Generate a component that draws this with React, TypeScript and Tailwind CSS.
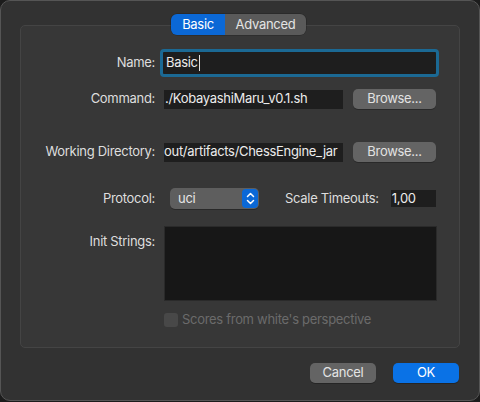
import React from "react";

const font = { fontFamily: "Inter, 'Noto Sans', sans-serif" };

function Label({ children, className = "" }: { children: React.ReactNode; className?: string }) {
  return (
    <div className={"w-[134px] shrink-0 text-right text-[13px] text-[#dedede] " + className}>{children}</div>
  );
}

function BrowseButton() {
  return (
    <div className="ml-[10px] flex h-[20px] w-[83px] items-center justify-center rounded-[5px] bg-[#646464] text-[13px] text-[#e2e2e2] shadow-[0_1px_0_rgba(0,0,0,0.25)]">
      Browse...
    </div>
  );
}

export default function App() {
  return (
    <div className="h-[402px] w-[480px] bg-[#1c1c1c] tracking-[-0.3px]" style={font}>
      <div className="flex h-[401px] w-[480px] flex-col rounded-[10px] border border-[#555555] bg-[#323232] px-[19px]">
        {/* tabs */}
        <div className="relative z-10 mt-[13px] -mb-[10px] flex justify-center pr-[3px]">
          <div className="flex h-[21px] overflow-hidden rounded-[6px] text-[13px] shadow-[0_0_0_0.5px_rgba(0,0,0,0.3)]">
            <div className="flex w-[54px] items-center justify-center bg-[#0b68d6] text-white">Basic</div>
            <div className="flex w-[81px] items-center justify-center bg-[#5a5a5a] text-[#e4e4e4]">Advanced</div>
          </div>
        </div>
        {/* group box */}
        <div className="flex h-[323px] flex-col rounded-[5px] border border-[#444444] bg-[#373737] pt-[23px]">
          {/* Name */}
          <div className="flex items-center">
            <Label>Name:</Label>
            <div className="ml-[5px] flex h-[28px] w-[279px] items-center rounded-[4px] border-[3px] border-[#1b6994] bg-[#1e1e1e] pl-[3px] text-[13px] text-[#ececec]">
              Basic<span className="ml-px inline-block h-[16px] w-px bg-[#e0e0e0]" />
            </div>
          </div>
          {/* Command */}
          <div className="mt-[12px] flex items-center">
            <Label>Command:</Label>
            <div className="ml-[9px] flex h-[19px] w-[179px] items-center bg-[#1e1e1e] pl-[1px] text-[13px] text-[#ececec]">
              ./KobayashiMaru_v0.1.sh
            </div>
            <BrowseButton />
          </div>
          {/* Working directory */}
          <div className="mt-[33px] flex items-center">
            <Label>Working Directory:</Label>
            <div className="ml-[9px] flex h-[19px] w-[179px] items-center overflow-hidden whitespace-nowrap bg-[#1e1e1e] text-[13px] text-[#ececec]">
              out/artifacts/ChessEngine_jar
            </div>
            <BrowseButton />
          </div>
          {/* Protocol */}
          <div className="mt-[26px] flex items-center">
            <Label>Protocol:</Label>
            <div className="ml-[15px] flex h-[21px] w-[89px] items-center justify-between rounded-[5px] bg-[#5e5e5e] pl-[8px] pr-[1px] text-[13px] text-[#e6e6e6] shadow-[0_1px_0_rgba(0,0,0,0.25)]">
              <span>uci</span>
              <div className="flex h-[19px] w-[16px] items-center justify-center rounded-[4px] bg-[#0b68d6]">
                <svg width="9" height="13" viewBox="0 0 9 13" fill="none" stroke="white" strokeWidth="1.5" strokeLinecap="round" strokeLinejoin="round">
                  <path d="M1.5 4.5 L4.5 1.5 L7.5 4.5" />
                  <path d="M1.5 8.5 L4.5 11.5 L7.5 8.5" />
                </svg>
              </div>
            </div>
            <div className="ml-[26px] text-[13px] text-[#dedede]">Scale Timeouts:</div>
            <div className="ml-[12px] flex h-[17px] w-[45px] items-center bg-[#1e1e1e] pl-[1px] text-[13px] text-[#ececec]">1,00</div>
          </div>
          {/* Init strings */}
          <div className="mt-[17px] flex items-start">
            <Label className="pt-[6px]">Init Strings:</Label>
            <div className="ml-[9px] h-[75px] w-[273px] border border-[#2a2a2a] bg-[#171717]" />
          </div>
          {/* checkbox */}
          <div className="mt-[9px] flex items-center pl-[143px]">
            <div className="h-[14px] w-[14px] rounded-[3px] bg-[#484848]" />
            <span className="ml-[4px] text-[13px] text-[#6b6b6b]">Scores from white's perspective</span>
          </div>
        </div>
        {/* buttons */}
        <div className="mt-[15px] flex justify-end gap-[17px] pr-[1px]">
          <div className="flex h-[20px] w-[66px] items-center justify-center rounded-[5px] bg-[#646464] text-[13px] text-[#e4e4e4] shadow-[0_1px_0_rgba(0,0,0,0.25)]">Cancel</div>
          <div className="flex h-[20px] w-[66px] items-center justify-center rounded-[5px] bg-[#0a72e6] text-[13px] text-white shadow-[0_1px_0_rgba(0,0,0,0.25)]">OK</div>
        </div>
      </div>
    </div>
  );
}
